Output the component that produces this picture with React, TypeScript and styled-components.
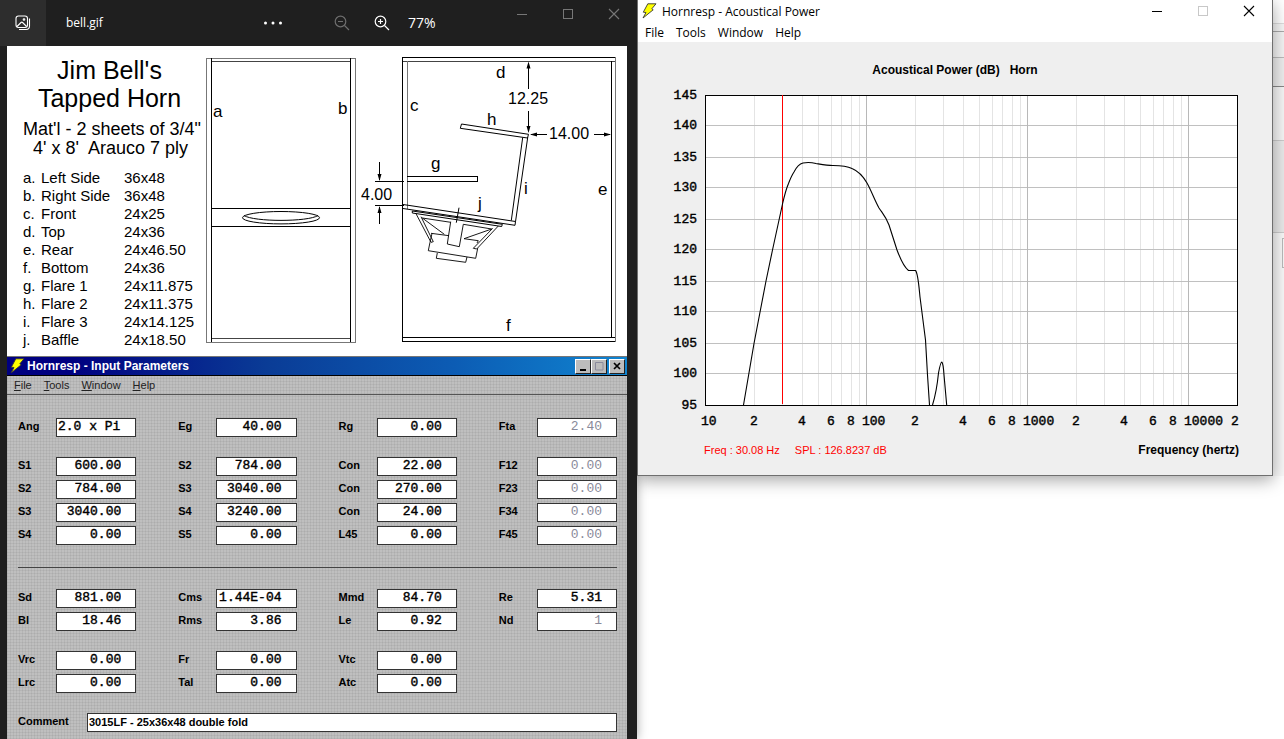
import React from "react";
import styled, { createGlobalStyle } from "styled-components";

const GlobalStyle = createGlobalStyle`
  *, *::before, *::after { box-sizing: border-box; }
  body { margin: 0; background: #fff; font-family: "Liberation Sans", Arial, sans-serif; }
  button, input { font: inherit; margin: 0; padding: 0; border: 0; background: none; color: inherit; }
  h1, h2, p { margin: 0; font-weight: 400; }
`;

const uiFont = `"Open Sans", "Noto Sans", sans-serif`;
const monoFont = `"Liberation Mono", "Courier New", monospace`;

const Desktop = styled.div`
  display: grid;
  grid-template-columns: minmax(0, 637fr) minmax(0, 647fr);
  min-height: 100vh;
`;

/* ---------- Photo viewer ---------- */

const Viewer = styled.section`
  position: relative;
  z-index: 1;
  display: flex;
  flex-direction: column;
  background: #1f1f1f;
  box-shadow: 0 0 10px rgba(0, 0, 0, 0.35);
`;

const ViewerBar = styled.header`
  display: flex;
  height: 46px;
  align-items: center;
  color: #fff;
  font-family: ${uiFont};
`;

const ViewerTile = styled.button`
  display: grid;
  place-items: center;
  width: 46px;
  height: 46px;
  background: #2d2d2d;
`;

const FileName = styled.h1`
  flex: 1;
  padding-left: 20px;
  font-size: 12px;
  line-height: 46px;
`;

const ToolButton = styled.button<{ $dim?: boolean }>`
  display: grid;
  place-items: center;
  width: 40px;
  height: 46px;
  color: ${(p) => (p.$dim ? "#6e6e6e" : "#fff")};
`;

const ZoomGroup = styled.div`
  display: flex;
  align-items: center;
  margin-left: 29px;
`;

const ZoomLevel = styled.output`
  width: 97px;
  padding-left: 6px;
  font-size: 14px;
  line-height: 46px;
`;

const Captions = styled.div`
  display: flex;
  align-self: flex-start;
`;

const CaptionButton = styled.button<{ $color: string; $height: number }>`
  display: grid;
  place-items: center;
  width: 46px;
  height: ${(p) => p.$height}px;
  color: ${(p) => p.$color};
`;

const ViewerBody = styled.main`
  flex: 1;
  display: flex;
  flex-direction: column;
  padding: 0 10px 0 7px;
`;

/* ---------- Plan sheet ---------- */

const Sheet = styled.div`
  display: flex;
  background: #fff;
  color: #000;
`;

const Notes = styled.div`
  flex: none;
  width: 199px;
  padding-top: 10px;
  white-space: pre;
`;

const SheetTitle = styled.h2`
  padding-left: 6px;
  font-size: 25px;
  line-height: 28px;
  text-align: center;
`;

const Material = styled.p`
  margin: 8px 0 11px;
  padding-left: 16px;
  font-size: 18px;
  line-height: 19px;
`;

const PartsTable = styled.table`
  margin-left: 16px;
  border-collapse: collapse;
  font-size: 15px;
  line-height: 18px;
  td { padding: 0; }
  td:nth-child(1) { width: 18px; }
  td:nth-child(2) { width: 83px; }
`;

const Plan = styled.svg`
  flex: 1;
  min-width: 0;
  display: block;
`;

const parts = [
  ["a.", "Left Side", "36x48"],
  ["b.", "Right Side", "36x48"],
  ["c.", "Front", "24x25"],
  ["d.", "Top", "24x36"],
  ["e.", "Rear", "24x46.50"],
  ["f.", "Bottom", "24x36"],
  ["g.", "Flare 1", "24x11.875"],
  ["h.", "Flare 2", "24x11.375"],
  ["i.", "Flare 3", "24x14.125"],
  ["j.", "Baffle", "24x18.50"],
];

const planLetters: [string, number, number][] = [
  ["a", 213, 117], ["b", 338, 114], ["c", 410, 111], ["d", 496, 78],
  ["e", 598, 195], ["f", 506, 331], ["g", 431, 169], ["h", 487, 125],
  ["i", 524, 194], ["j", 478, 209],
];

function PlanDrawing() {
  return (
    <Plan viewBox="206 46 421 310" role="img" aria-label="Tapped horn cabinet plan">
      <g fill="none" stroke="#777" shapeRendering="crispEdges">
        <path d="M206.5 58.5H355.5V342.5H206.5Z" />
        <path d="M211 61.5H351M211 338.5H351" stroke="#444" />
        <path d="M211.5 58V342M350.5 58V342M211 208.5H351M211 226.5H351" stroke="#000" />
        <path d="M402.5 57.5H616M402.5 57V342M402 341.5H616M402 337.5H616" stroke="#000" />
        <path d="M403 61.5H616" stroke="#444" />
        <path d="M407.5 61V209M615.5 57V342" />
        <path d="M611.5 61V337" stroke="#000" />
        <path d="M407 176.5H477.5V181.5H407" stroke="#000" />
        <path d="M375 181.5H404M375 205.5H404" stroke="#000" />
        <path d="M379.5 162V180M379.5 207V224M528.5 63V89M528.5 111V131M531 134.5H547M594 134.5H610" stroke="#000" />
      </g>
      <path
        d="M379.5 181l-2-7h4zM379.5 206l-2 7h4zM528.5 61.500l-2 7h4zM528.5 133l-2-7h4zM530 134.500l7-2v4zM611 134.500l-7-2v4z"
        fill="#000"
      />
      <g fill="none" stroke="#000">
        <ellipse cx="281" cy="217.700" rx="38.500" ry="6.200" />
        <path d="M244 215.500C254 222 308 222 318 215.500" />
        <path d="M461.500 124L528.500 134.300L527.500 138L460.300 128.300Z" />
        <path d="M522.700 137.500L511.300 220.500M527.700 137.500L515.500 221.700" />
        <path d="M403 204.500L515.500 221.500L515 225.300L403 208.500" />
        <path d="M412.300 211L502.300 224.300L501.700 226.500L412.300 213Z" />
        <path d="M459 207.700L456.300 222.700" />
      </g>
      <g fill="none" stroke="#000" strokeWidth="0.9">
        <path d="M416 213.700L431 242.300L433.300 241.700L421 216.700M498.300 226L476.700 249L473.300 248.300L492.700 228.300" />
        <path d="M450.700 222.300L422.300 218L444.300 234.300M431 233.300L449 235.700" />
        <path d="M450.700 221.700L447.300 244L459.300 246.700L463.300 224.300L491.700 229L464 238.700L478.300 240.700L477 243" />
        <path d="M432 233.500L430 242.300L428.300 250.700L475.700 258.300L477.700 248.300" />
        <path d="M437.300 253L436.300 258.300L465.700 262.300L467 257" />
      </g>
      <g fontSize="17" fontFamily="Liberation Sans, Arial, sans-serif">
        {planLetters.map(([letter, x, y]) => (
          <text key={letter} x={x} y={y}>{letter}</text>
        ))}
      </g>
      <g fontSize="16" fontFamily="Liberation Sans, Arial, sans-serif">
        <text x="508" y="104">12.25</text>
        <text x="549" y="139">14.00</text>
        <text x="361" y="200">4.00</text>
      </g>
    </Plan>
  );
}

/* ---------- Input parameters window ---------- */

const ClassicWindow = styled.section`
  flex: 1;
  border-top: 1px solid #777;
  background-color: #bfbfbf;
  background-image:
    repeating-linear-gradient(90deg, rgba(0, 0, 0, 0.05) 0 1px, transparent 1px 3px),
    repeating-linear-gradient(0deg, rgba(0, 0, 0, 0.05) 0 1px, transparent 1px 3px);
`;

const ClassicTitle = styled.div`
  display: flex;
  align-items: center;
  height: 19px;
  padding: 0 2px 0 3px;
  border-bottom: 1px solid #000;
  background: linear-gradient(90deg, #000080 10%, #0a3c96 42%, #0c5cb4 72%, #1084d0);
  color: #fff;
`;

const ClassicHeading = styled.h2`
  flex: 1;
  padding-left: 1px;
  font-size: 12px;
  font-weight: 700;
`;

const ClassicButton = styled.button<{ $gap?: boolean }>`
  display: grid;
  place-items: center;
  width: 16px;
  height: 15px;
  margin-left: ${(p) => (p.$gap ? 2 : 0)}px;
  border: 1px solid;
  border-color: #fff #222 #222 #fff;
  background: #bcbcbc;
`;

const ClassicMenu = styled.nav`
  display: flex;
  gap: 12px;
  height: 19px;
  padding-left: 7px;
  border-bottom: 1px solid #555;
  font-size: 11px;
  line-height: 17px;
  color: #222;
`;

const MenuItem = styled.button`
  line-height: inherit;
`;

const Form = styled.form`
  padding: 23px 10px 7px 11px;
  font-size: 11px;
  font-weight: 700;
`;

const FieldGrid = styled.div`
  display: grid;
  grid-template-columns: repeat(4, minmax(0, 1fr));
  gap: 4px 42px;
`;

const FieldGap = styled.div`
  height: 20px;
`;

const Rule = styled.hr`
  height: 1px;
  margin: 22px 0 21px;
  border: 0;
  background: #444;
`;

const Field = styled.label`
  display: flex;
  height: 19px;
  line-height: 17px;
`;

const FieldName = styled.span<{ $width: number }>`
  flex: none;
  width: ${(p) => p.$width}px;
`;

const FieldInput = styled.input<{ $left?: boolean; $plain?: boolean }>`
  flex: 1;
  min-width: 0;
  height: 19px;
  padding: 0 ${(p) => (p.$left ? 0 : 14)}px 2px 1px;
  border: 1px solid #333;
  background: #fff;
  color: #000;
  font-family: ${(p) => (p.$plain ? "inherit" : monoFont)};
  font-size: ${(p) => (p.$plain ? 11 : 13)}px;
  font-weight: ${(p) => (p.$plain ? 700 : 400)};
  -webkit-text-stroke: ${(p) => (p.$plain ? "0" : "0.4px")};
  text-align: ${(p) => (p.$left ? "left" : "right")};
  &:disabled { color: #8a8a9a; -webkit-text-stroke: 0; }
`;

type FieldSpec = [name: string, value: string, disabled?: boolean] | null;

const driveFields: FieldSpec[] = [
  ["Ang", "2.0 x Pi"], ["Eg", "40.00"], ["Rg", "0.00"], ["Fta", "2.40", true],
];
const hornFields: FieldSpec[] = [
  ["S1", "600.00"], ["S2", "784.00"], ["Con", "22.00"], ["F12", "0.00", true],
  ["S2", "784.00"], ["S3", "3040.00"], ["Con", "270.00"], ["F23", "0.00", true],
  ["S3", "3040.00"], ["S4", "3240.00"], ["Con", "24.00"], ["F34", "0.00", true],
  ["S4", "0.00"], ["S5", "0.00"], ["L45", "0.00"], ["F45", "0.00", true],
];
const driverFields: FieldSpec[] = [
  ["Sd", "881.00"], ["Cms", "1.44E-04"], ["Mmd", "84.70"], ["Re", "5.31"],
  ["Bl", "18.46"], ["Rms", "3.86"], ["Le", "0.92"], ["Nd", "1", true],
];
const chamberFields: FieldSpec[] = [
  ["Vrc", "0.00"], ["Fr", "0.00"], ["Vtc", "0.00"], null,
  ["Lrc", "0.00"], ["Tal", "0.00"], ["Atc", "0.00"], null,
];

function Fields({ items }: { items: FieldSpec[] }) {
  return (
    <FieldGrid>
      {items.map((item, i) =>
        item ? (
          <Field key={i}>
            <FieldName $width={38}>{item[0]}</FieldName>
            <FieldInput defaultValue={item[1]} disabled={item[2]} $left={item[0] === "Ang"} />
          </Field>
        ) : (
          <span key={i} />
        )
      )}
    </FieldGrid>
  );
}

function Bolt() {
  return (
    <svg width="16" height="16" viewBox="0 0 16 16" aria-hidden="true">
      <path d="M5.800 0.800H14L9.800 5.800L11.200 6.800L1 15L4 9.500L1.300 9.200Z" fill="#ff0" stroke="#333" strokeWidth="0.9" />
    </svg>
  );
}

function ParametersWindow() {
  return (
    <ClassicWindow>
      <ClassicTitle>
        <Bolt />
        <ClassicHeading>Hornresp - Input Parameters</ClassicHeading>
        <ClassicButton aria-label="Minimize">
          <svg width="12" height="12"><path d="M3 10H9" stroke="#000" strokeWidth="2" /></svg>
        </ClassicButton>
        <ClassicButton aria-label="Maximize">
          <svg width="12" height="12"><path d="M2.500 2.500H10V10H2.500Z" stroke="#8a8a9c" fill="none" /></svg>
        </ClassicButton>
        <ClassicButton aria-label="Close" $gap>
          <svg width="12" height="12"><path d="M3 3L9 9M9 3L3 9" stroke="#000" strokeWidth="1.7" /></svg>
        </ClassicButton>
      </ClassicTitle>
      <ClassicMenu>
        {["File", "Tools", "Window", "Help"].map((m) => (
          <MenuItem key={m}><u>{m[0]}</u>{m.slice(1)}</MenuItem>
        ))}
      </ClassicMenu>
      <Form>
        <Fields items={driveFields} />
        <FieldGap />
        <Fields items={hornFields} />
        <Rule />
        <Fields items={driverFields} />
        <FieldGap />
        <Fields items={chamberFields} />
        <FieldGap />
        <Field>
          <FieldName $width={69}>Comment</FieldName>
          <FieldInput defaultValue="3015LF - 25x36x48 double fold" $left $plain />
        </Field>
      </Form>
    </ClassicWindow>
  );
}

/* ---------- Acoustical power window ---------- */

const Backdrop = styled.section`
  display: flex;
  align-items: flex-start;
  overflow: hidden;
  background: #fff;
`;

const PowerWindow = styled.section`
  position: relative;
  z-index: 2;
  flex: 1;
  min-width: 0;
  border: solid #6f6f6f;
  border-width: 0 1px 1px;
  background: #efefef;
  box-shadow: 0 4px 16px rgba(0, 0, 0, 0.36);
`;

const PowerTitle = styled.div`
  display: flex;
  height: 22px;
  align-items: center;
  padding-left: 4px;
  background: #fff;
  font-family: ${uiFont};
`;

const PowerHeading = styled.h2`
  flex: 1;
  padding-left: 4px;
  font-size: 12px;
`;

const PowerMenu = styled.nav`
  display: flex;
  gap: 12px;
  height: 20px;
  padding-left: 7px;
  background: #fff;
  font-family: ${uiFont};
  font-size: 12px;
  line-height: 22px;
`;

const ChartTitle = styled.p`
  padding-top: 20px;
  font-size: 12px;
  font-weight: 700;
  line-height: 16px;
  text-align: center;
  white-space: pre;
`;

const Chart = styled.svg`
  display: block;
  width: 100%;
`;

const Readout = styled.div`
  display: flex;
  gap: 15px;
  padding: 11px 33px 17px 66px;
  font-size: 11px;
  line-height: 16px;
  color: #f00;
`;

const AxisTitle = styled.span`
  margin-left: auto;
  color: #000;
  font-size: 12px;
  font-weight: 700;
`;

const PLOT_W = 532;
const PLOT_H = 310;
const DECADE = 161;

const levels: [number, number][] = [
  [145, 0], [140, 30], [135, 62], [130, 92], [125, 124], [120, 154],
  [115, 186], [110, 216], [105, 248], [100, 278], [95, 310],
];

const tickX = (decade: number, n: number) =>
  decade * DECADE + Math.ceil(DECADE * Math.log10(n) - 0.1);

const minorTicks = [0, 1, 2].flatMap((d) => [2, 3, 4, 5, 6, 7, 8, 9].map((n) => tickX(d, n)));
const majorTicks = [1, 2, 3].map((d) => d * DECADE);

const mainCurve =
  "M38.500 310L49 248.500L61 186L67.500 155L77.500 109C80 98 82 92 83.500 88.500C86 82 87 80 89 77C92 71 94 69 98 68C103 67 107 67.500 111 68.500C117 69.500 122 70.500 128 70.500C137 70.500 142 71 147 73.500C153 76 158 81 162 88C166 95 170 106 174 113C178 119 181 122 184 130L192 155C195 163 199 172 203.500 175.500H210.500C213 178 214 192 215 202L220.500 245L222.500 280L224.500 310";
const echoCurve = "M227.500 310C230 302 232 293 233.500 278C235 270 236 267 236.700 267C238 268 238.500 272 239 280C240 292 241 303 241.700 310";

function PowerChart() {
  return (
    <Chart viewBox="0 0 634 353" role="img" aria-label="Acoustical power against frequency">
      <g transform="translate(67 17)">
        <rect width={PLOT_W} height={PLOT_H} fill="#fff" />
        <g fill="none" shapeRendering="crispEdges">
          {minorTicks.map((x) => (
            <path key={x} d={`M${x + 0.5} 0V${PLOT_H}`} stroke="#e4e4e4" />
          ))}
          {levels.slice(1, -1).map(([db, y]) => (
            <path key={db} d={`M0 ${y + 0.5}H${PLOT_W}`} stroke="#c0c0c0" />
          ))}
          {majorTicks.map((x) => (
            <path key={x} d={`M${x + 0.5} 0V${PLOT_H}`} stroke="#b8b8b8" />
          ))}
          <rect x="0.5" y="0.5" width={PLOT_W} height={PLOT_H} stroke="#000" />
          <path d="M77.500 0V309" stroke="#f00" />
        </g>
        <path d={mainCurve} fill="none" stroke="#000" strokeWidth="1.1" />
        <path d={echoCurve} fill="none" stroke="#000" strokeWidth="1.1" />
        <g fontFamily="Liberation Mono, Courier New, monospace" fontSize="13" stroke="#000" strokeWidth="0.4">
          {levels.map(([db, y]) => (
            <text key={db} x="-8" y={y + 4} textAnchor="end">{db}</text>
          ))}
          {[10, 100, 1000, 10000].map((f, d) => (
            <text key={f} x={d * DECADE - 4} y="330">{f}</text>
          ))}
          {[0, 1, 2].flatMap((d) =>
            [2, 4, 6, 8].map((n) => (
              <text key={`${d}-${n}`} x={tickX(d, n)} y="330" textAnchor="middle">{n}</text>
            ))
          )}
          <text x="530" y="330" textAnchor="middle">2</text>
        </g>
      </g>
    </Chart>
  );
}

const Behind = styled.div`
  flex: none;
  display: flex;
  flex-direction: column;
  width: 11px;
  height: 476px;
  overflow: hidden;
`;

const BehindBand = styled.div<{ $height: number; $fill: string; $line: string }>`
  flex: none;
  height: ${(p) => p.$height}px;
  padding: 5px 0 0 9px;
  border-bottom: 1px solid ${(p) => p.$line};
  background: ${(p) => p.$fill};
`;

const BehindBox = styled.div`
  height: 30px;
  border: 1px solid #bbb;
  border-right: 0;
`;

type CaptionProps = { color: string; maxColor?: string; height: number };

function CaptionSet({ color, maxColor = color, height }: CaptionProps) {
  return (
    <Captions>
      <CaptionButton aria-label="Minimize" $color={color} $height={height}>
        <svg width="12" height="12"><path d="M1 6.500H11" stroke="currentColor" shapeRendering="crispEdges" /></svg>
      </CaptionButton>
      <CaptionButton aria-label="Maximize" $color={maxColor} $height={height}>
        <svg width="12" height="12"><path d="M1.500 1.500H10.500V10.500H1.500Z" fill="none" stroke="currentColor" shapeRendering="crispEdges" /></svg>
      </CaptionButton>
      <CaptionButton aria-label="Close" $color={color} $height={height}>
        <svg width="12" height="12"><path d="M1 1L11 11M11 1L1 11" stroke="currentColor" strokeWidth="1.1" /></svg>
      </CaptionButton>
    </Captions>
  );
}

function Lens({ plus }: { plus?: boolean }) {
  return (
    <svg width="16" height="16" viewBox="0 0 16 16" fill="none" stroke="currentColor" strokeWidth="1.2">
      <circle cx="6.500" cy="6.500" r="5.300" />
      <path d="M10.500 10.500L15 15M4 6.500H9" />
      {plus && <path d="M6.500 4V9" />}
    </svg>
  );
}

export default function App() {
  return (
    <Desktop>
      <GlobalStyle />
      <Viewer>
        <ViewerBar>
          <ViewerTile aria-label="Gallery">
            <svg width="16" height="16" viewBox="0 0 16 16" fill="none" stroke="#fff" strokeWidth="1.1">
              <rect x="1" y="1" width="11.500" height="11.500" rx="2.500" />
              <path d="M2 11.500L6 7.500Q6.800 6.800 7.600 7.500L11.600 11.500M14.500 3.500V11Q14.500 14.500 11 14.500H4" />
              <circle cx="9" cy="4.500" r="0.8" />
            </svg>
          </ViewerTile>
          <FileName>bell.gif</FileName>
          <ToolButton aria-label="See more">
            <svg width="20" height="4" fill="#fff">
              <circle cx="2.500" cy="2" r="1.500" /><circle cx="10" cy="2" r="1.500" /><circle cx="17.500" cy="2" r="1.500" />
            </svg>
          </ToolButton>
          <ZoomGroup>
            <ToolButton $dim aria-label="Zoom out"><Lens /></ToolButton>
            <ToolButton aria-label="Zoom in"><Lens plus /></ToolButton>
            <ZoomLevel>77%</ZoomLevel>
          </ZoomGroup>
          <CaptionSet color="#777" height={28} />
        </ViewerBar>
        <ViewerBody>
          <Sheet>
            <Notes>
              <SheetTitle>{"Jim Bell's\nTapped Horn"}</SheetTitle>
              <Material>{"Mat'l - 2 sheets of 3/4\"\n  4' x 8'  Arauco 7 ply"}</Material>
              <PartsTable>
                <tbody>
                  {parts.map(([key, name, size]) => (
                    <tr key={key}><td>{key}</td><td>{name}</td><td>{size}</td></tr>
                  ))}
                </tbody>
              </PartsTable>
            </Notes>
            <PlanDrawing />
          </Sheet>
          <ParametersWindow />
        </ViewerBody>
      </Viewer>
      <Backdrop>
        <PowerWindow>
          <PowerTitle>
            <Bolt />
            <PowerHeading>Hornresp - Acoustical Power</PowerHeading>
            <CaptionSet color="#000" maxColor="#c8c8c8" height={22} />
          </PowerTitle>
          <PowerMenu>
            {["File", "Tools", "Window", "Help"].map((m) => <MenuItem key={m}>{m}</MenuItem>)}
          </PowerMenu>
          <ChartTitle>{"Acoustical Power (dB)   Horn"}</ChartTitle>
          <PowerChart />
          <Readout>
            <span>Freq : 30.08 Hz</span>
            <span>SPL : 126.8237 dB</span>
            <AxisTitle>Frequency (hertz)</AxisTitle>
          </Readout>
        </PowerWindow>
        <Behind>
          <BehindBand $height={24} $fill="#fff" $line="#ddd" />
          <BehindBand $height={8} $fill="#f6f6f6" $line="#aaa" />
          <BehindBand $height={26} $fill="#f4f4f4" $line="#bbb" />
          <BehindBand $height={29} $fill="#eee" $line="#888" />
          <BehindBand $height={54} $fill="#f6f6f6" $line="#ccc" />
          <BehindBand $height={92} $fill="#eaeaea" $line="#ccc" />
          <BehindBand $height={244} $fill="#f9f9f9" $line="#fff"><BehindBox /></BehindBand>
        </Behind>
      </Backdrop>
    </Desktop>
  );
}
